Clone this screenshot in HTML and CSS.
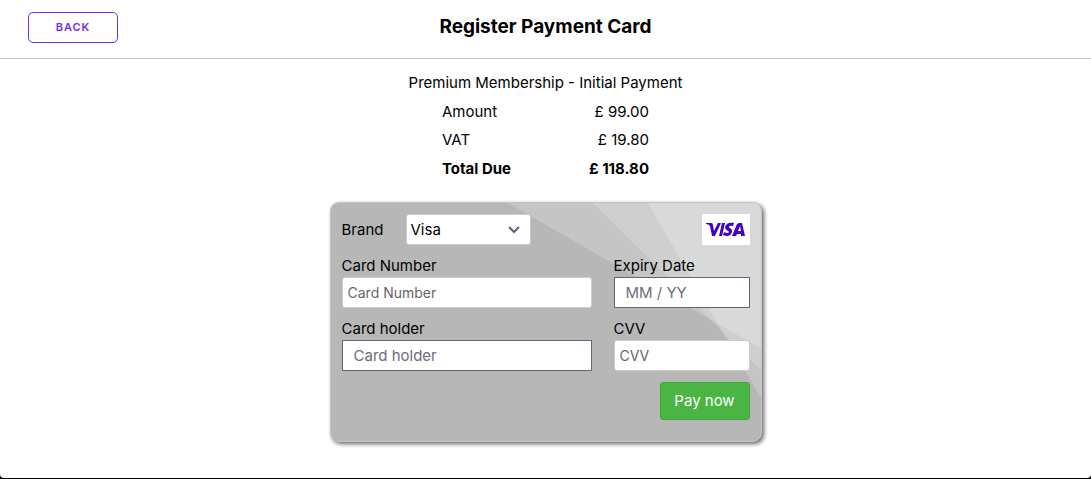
FILE: index.html
```
<!DOCTYPE html>
<html lang="en">
<head>
    <meta charset="UTF-8">
    <meta name="viewport" content="width=device-width, initial-scale=1.0">
    <title>Register Payment Card</title>
    <link rel="stylesheet" href="styles.css">
</head>
<body>
    <header class="top-bar">
        <button type="button" class="back-button">BACK</button>
        <h1>Register Payment Card</h1>
    </header>

    <main>
        <table class="summary">
            <caption>Premium Membership - Initial Payment</caption>
            <tr>
                <th>Amount</th>
                <td>£ 99.00</td>
            </tr>
            <tr>
                <th>VAT</th>
                <td>£ 19.80</td>
            </tr>
            <tr class="total">
                <th>Total Due</th>
                <td>£ 118.80</td>
            </tr>
        </table>

        <form class="card">
            <svg class="card-rays" viewBox="0 0 430 238" preserveAspectRatio="none" aria-hidden="true">
                <path fill="#c5c5c5" d="M177 0H430V195L391 128L380 117Z"/>
                <path fill="#cfcfcf" d="M262 0H430V167L391 128L387 121L380 117Z"/>
                <path fill="#d9d9d9" d="M317 0H430V145L387 121Z"/>
            </svg>

            <div class="brand-row">
                <label for="brand">Brand</label>
                <div class="select-wrap">
                    <select id="brand" name="brand">
                        <option value="visa">Visa</option>
                        <option value="mastercard">Mastercard</option>
                    </select>
                    <svg class="chevron" viewBox="0 0 12 8" aria-hidden="true">
                        <path d="M1 1L6 6L11 1" fill="none" stroke="#5f6078" stroke-width="2"/>
                    </svg>
                </div>
                <svg class="visa-logo" viewBox="0 0 48 31" role="img" aria-label="Visa">
                    <path fill="#fff" d="M0 0H48V31H0Z"/>
                    <path fill="#4300c8" fill-rule="evenodd" d="M4 9H9Q11 9 11 11L12 17L16 9H19L13 22H10L8 12Q7 10 4 10ZM20 9H23L20 22H17ZM32 9L31 12Q27 11 27 13C27 14 31 15 30 18C29 22 25 23 21 21L22 18Q26 20 27 18C27 17 23 16 23 13C24 9 28 8 32 9ZM37 9H40L43 22H39V20H35L34 22H30L35 10ZM38 12L36 17H39Z"/>
                </svg>
            </div>

            <div class="fields">
                <div class="field">
                    <label for="cardNumber">Card Number</label>
                    <input type="text" id="cardNumber" name="cardNumber" class="hosted" placeholder="Card Number">
                </div>
                <div class="field">
                    <label for="expiry">Expiry Date</label>
                    <input type="text" id="expiry" name="expiry" placeholder="MM / YY">
                </div>
                <div class="field">
                    <label for="cardHolder">Card holder</label>
                    <input type="text" id="cardHolder" name="cardHolder" placeholder="Card holder">
                </div>
                <div class="field">
                    <label for="cvv">CVV</label>
                    <input type="text" id="cvv" name="cvv" class="hosted" placeholder="CVV">
                </div>
            </div>

            <button type="submit" class="pay-button">Pay now</button>
        </form>
    </main>
</body>
</html>
```
FILE: styles.css
```
* {
    box-sizing: border-box;
}
html {
    background: #000;
}
body {
    margin: 0;
    min-height: calc(100vh - 1px);
    background: #fff;
    border-radius: 0 0 4px 4px;
    font-family: Inter, "Liberation Sans", sans-serif;
    font-size: 15px;
    line-height: 20px;
    color: #000;
}
button, input, select {
    font: inherit;
}
.top-bar {
    display: grid;
    grid-template-columns: 1fr auto 1fr;
    align-items: start;
    padding: 12px 28px 15px;
    border-bottom: 1px solid #c9c8d1;
}
.top-bar h1 {
    margin: 0;
    font-size: 19px;
    line-height: 30px;
    font-weight: 700;
}
.back-button {
    width: 90px;
    height: 31px;
    padding: 0 0 2px;
    background: #fff;
    border: 1px solid #702df5;
    border-radius: 5px;
    color: #702df5;
    font-size: 11px;
    font-weight: 600;
    letter-spacing: 1px;
    cursor: pointer;
}
.summary {
    margin: 14px auto 0;
    width: 207px;
    border-collapse: collapse;
}
.summary caption {
    margin: 0 -50px 5px;
    white-space: nowrap;
}
.summary th, .summary td {
    padding: 4px 0;
    font-weight: 400;
    text-align: left;
}
.summary td {
    text-align: right;
}
.summary .total th, .summary .total td {
    padding-top: 5px;
    font-weight: 700;
}
.card {
    position: relative;
    width: 432px;
    max-width: 100%;
    margin: 19px auto 35px;
    padding: 11px 11px 21px;
    background: #b7b7b7;
    border: 1px solid #c4c4c4;
    border-radius: 9px;
    box-shadow: 2px 2px 4px rgba(0, 0, 0, 0.6);
}
.card-rays {
    position: absolute;
    inset: 0;
    width: 100%;
    height: 100%;
    border-radius: 8px;
}
.brand-row, .fields {
    position: relative;
}
.brand-row {
    display: flex;
    align-items: center;
    margin-bottom: 11px;
}
.brand-row label {
    width: 64px;
}
.select-wrap {
    position: relative;
    width: 125px;
}
.select-wrap select {
    appearance: none;
    display: block;
    width: 100%;
    height: 31px;
    padding: 0 4px;
    background: #fff;
    border: 1px solid #ccc;
    border-radius: 3px;
    color: #000;
}
.chevron {
    position: absolute;
    top: 12px;
    right: 11px;
    width: 12px;
    height: 8px;
    pointer-events: none;
}
.visa-logo {
    width: 48px;
    height: 31px;
    margin-left: auto;
}
.fields {
    display: grid;
    grid-template-columns: 250fr 136fr;
    gap: 11px 22px;
}
.field label {
    display: block;
    margin-bottom: 1px;
}
.field input {
    display: block;
    width: 100%;
    height: 31px;
    padding: 0 11px;
    background: #fff;
    border: 1px solid #636477;
    border-radius: 0;
}
.field input::placeholder {
    color: #6c6c80;
}
.field input.hosted {
    padding: 0 5px;
    border-color: #ccc;
    border-radius: 3px;
    font-size: 14px;
}
.field input.hosted::placeholder {
    color: #666;
}
.pay-button {
    position: relative;
    display: block;
    width: 90px;
    height: 38px;
    margin: 11px 0 0 auto;
    padding: 0;
    background: #4bb543;
    border: 1px solid #3fa838;
    border-radius: 3px;
    color: #fff;
    cursor: pointer;
}
```
